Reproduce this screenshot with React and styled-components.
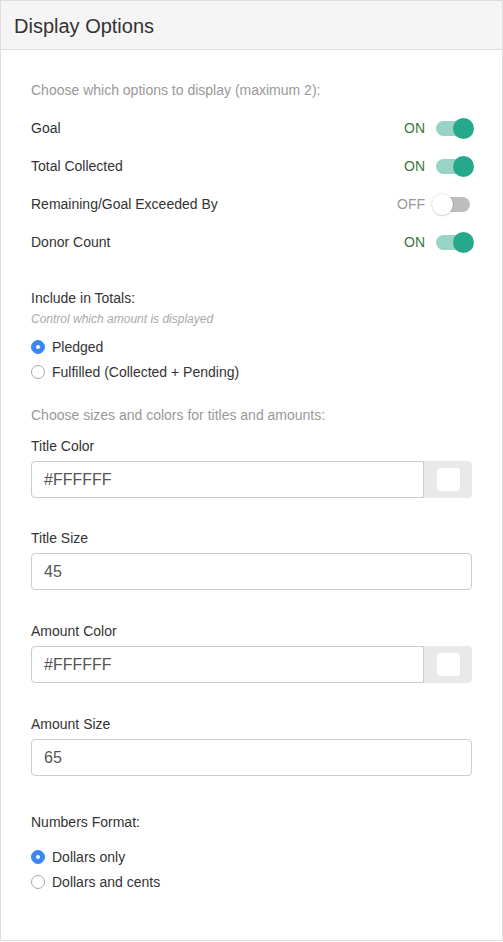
import React from "react";
import styled, { createGlobalStyle } from "styled-components";

const Global = createGlobalStyle`
  * { box-sizing: border-box; }
  html, body { margin: 0; padding: 0; background: #fff; }
  body { font-family: "Liberation Sans", Arial, Helvetica, sans-serif; color: #333; }
`;

const Panel = styled.div`
  width: 503px;
  height: 941px;
  border: 1px solid #dddddd;
  background: #fff;
  display: flex;
  flex-direction: column;
`;

const Header = styled.div`
  height: 49px;
  flex: none;
  background: #f5f5f5;
  border-bottom: 1px solid #dddddd;
  display: flex;
  align-items: center;
  padding: 0 13px;
`;

const Title = styled.h3`
  margin: 0;
  font-size: 20px;
  font-weight: 400;
  color: #333;
  line-height: 24px;
  padding-top: 1px;
`;

const Body = styled.div`
  padding: 30px 30px 0 30px;
  display: flex;
  flex-direction: column;
`;

const Help = styled.div`
  font-size: 14px;
  line-height: 20px;
  color: #999;
  margin-top: ${(p) => p.$mt || 0}px;
`;

const ToggleList = styled.div`
  margin-top: 9px;
  display: flex;
  flex-direction: column;
`;

const ToggleRow = styled.div`
  height: 38px;
  display: flex;
  align-items: center;
  justify-content: space-between;
`;

const RowLabel = styled.span`
  font-size: 14px;
  color: #333;
`;

const ToggleWrap = styled.div`
  display: flex;
  align-items: center;
  gap: 11px;
  padding-right: 2px;
`;

const State = styled.span`
  font-size: 14px;
  color: ${(p) => (p.$on ? "#3c763d" : "#999")};
`;

const Track = styled.span`
  position: relative;
  width: 34px;
  height: 15px;
  border-radius: 8px;
  background: ${(p) => (p.$on ? "#97d4c5" : "#bdbdbd")};
  display: inline-block;
`;

const Thumb = styled.span`
  position: absolute;
  top: -3px;
  left: ${(p) => (p.$on ? "17px" : "-4px")};
  width: 21px;
  height: 21px;
  border-radius: 50%;
  background: ${(p) => (p.$on ? "#26a98b" : "#ffffff")};
  box-shadow: ${(p) =>
    p.$on ? "none" : "0 0 0 1px rgba(0,0,0,0.06), 0 1px 2px rgba(0,0,0,0.12)"};
`;

const Label = styled.div`
  font-size: 14px;
  line-height: 20px;
  color: #333;
  margin-top: ${(p) => p.$mt || 0}px;
`;

const SubText = styled.div`
  font-size: 12px;
  line-height: 16px;
  font-style: italic;
  color: #aaa;
  margin-top: 3px;
`;

const RadioGroup = styled.div`
  display: flex;
  flex-direction: column;
  margin-top: ${(p) => p.$mt || 0}px;
`;

const RadioRow = styled.label`
  height: 25px;
  display: flex;
  align-items: center;
  gap: 7px;
  font-size: 14px;
  color: #333;
`;

const RadioDot = styled.span`
  width: 14px;
  height: 14px;
  border-radius: 50%;
  flex: none;
  display: flex;
  align-items: center;
  justify-content: center;
  background: ${(p) => (p.$checked ? "#3b86f5" : "#fff")};
  border: 1px solid ${(p) => (p.$checked ? "#3b86f5" : "#a9a9a9")};
  &::after {
    content: "";
    width: 4px;
    height: 4px;
    border-radius: 50%;
    background: #fff;
    display: ${(p) => (p.$checked ? "block" : "none")};
  }
`;

const Field = styled.div`
  display: flex;
  flex-direction: column;
  gap: 5px;
  margin-top: ${(p) => p.$mt || 0}px;
`;

const InputGroup = styled.div`
  display: flex;
  height: 37px;
`;

const TextInput = styled.input`
  flex: 1;
  min-width: 0;
  height: 37px;
  border: 1px solid #cccccc;
  border-radius: ${(p) => (p.$addon ? "4px 0 0 4px" : "4px")};
  padding: 0 12px;
  font-family: "Liberation Sans", Arial, Helvetica, sans-serif;
  font-size: 16px;
  color: #555;
  background: #fff;
  outline: none;
`;

const Addon = styled.span`
  width: 48px;
  flex: none;
  background: #e9e9e9;
  border-radius: 0 4px 4px 0;
  display: flex;
  align-items: center;
  justify-content: center;
`;

const Swatch = styled.span`
  width: 23px;
  height: 23px;
  border-radius: 4px;
  background: ${(p) => p.$color};
`;

function Toggle({ on }) {
  return (
    <ToggleWrap>
      <State $on={on}>{on ? "ON" : "OFF"}</State>
      <Track $on={on}>
        <Thumb $on={on} />
      </Track>
    </ToggleWrap>
  );
}

function Radio({ checked, children }) {
  return (
    <RadioRow>
      <RadioDot $checked={checked} />
      {children}
    </RadioRow>
  );
}

const toggles = [
  { label: "Goal", on: true },
  { label: "Total Collected", on: true },
  { label: "Remaining/Goal Exceeded By", on: false },
  { label: "Donor Count", on: true },
];

const fields = [
  { label: "Title Color", value: "#FFFFFF", color: "#FFFFFF" },
  { label: "Title Size", value: "45" },
  { label: "Amount Color", value: "#FFFFFF", color: "#FFFFFF" },
  { label: "Amount Size", value: "65" },
];

export default function App() {
  return (
    <>
      <Global />
      <Panel>
        <Header>
          <Title>Display Options</Title>
        </Header>
        <Body>
          <Help>Choose which options to display (maximum 2):</Help>
          <ToggleList>
            {toggles.map((t) => (
              <ToggleRow key={t.label}>
                <RowLabel>{t.label}</RowLabel>
                <Toggle on={t.on} />
              </ToggleRow>
            ))}
          </ToggleList>

          <Label $mt={27}>Include in Totals:</Label>
          <SubText>Control which amount is displayed</SubText>
          <RadioGroup $mt={7}>
            <Radio checked>Pledged</Radio>
            <Radio>Fulfilled (Collected + Pending)</Radio>
          </RadioGroup>

          <Help $mt={21}>Choose sizes and colors for titles and amounts:</Help>
          {fields.map((f, i) => (
            <Field key={f.label} $mt={i === 0 ? 11 : i === 1 ? 30 : 31}>
              <Label>{f.label}</Label>
              <InputGroup>
                <TextInput $addon={!!f.color} defaultValue={f.value} />
                {f.color && (
                  <Addon>
                    <Swatch $color={f.color} />
                  </Addon>
                )}
              </InputGroup>
            </Field>
          ))}

          <Label $mt={36}>Numbers Format:</Label>
          <RadioGroup $mt={12}>
            <Radio checked>Dollars only</Radio>
            <Radio>Dollars and cents</Radio>
          </RadioGroup>
        </Body>
      </Panel>
    </>
  );
}
